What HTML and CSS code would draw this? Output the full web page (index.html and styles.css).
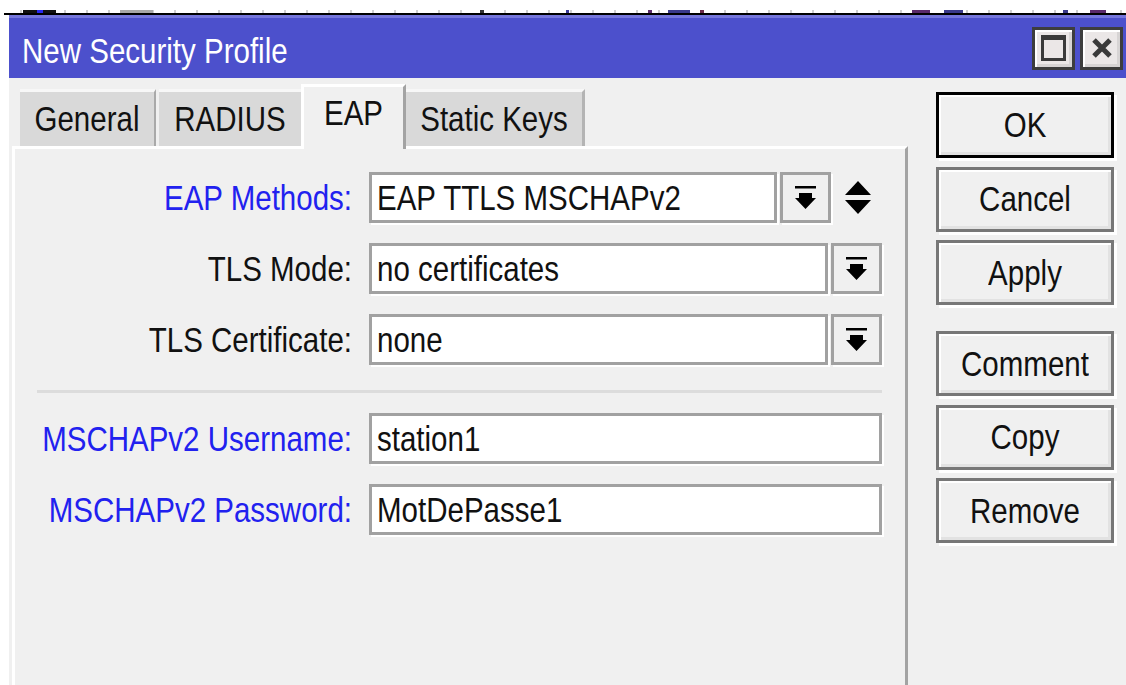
FILE: index.html
```html
<!DOCTYPE html>
<html lang="en">
<head>
<meta charset="utf-8">
<title>New Security Profile</title>
<link rel="stylesheet" href="styles.css">
</head>
<body>
  <div class="backdrop">
    <div class="backdrop-marks"></div>
    <div class="backdrop-edge"></div>
  </div>

  <div class="window">
    <div class="titlebar">
      <span class="title"><span class="tx">New Security Profile</span></span>
      <div class="title-btns">
        <span class="tbtn" title="Maximize">
          <svg width="25" height="26" viewBox="0 0 25 26"><path fill="#3a3a3a" fill-rule="evenodd" d="M0 0H25V26H0Z M3 5V23H22V5Z"/></svg>
        </span>
        <span class="tbtn" title="Close">
          <svg width="20" height="20" viewBox="0 0 20 20"><path stroke="#3a3a3a" stroke-width="5" d="M2 2L18 18M18 2L2 18"/></svg>
        </span>
      </div>
    </div>

    <div class="body">
      <div class="main">
        <div class="tabs">
          <div class="tab tab--general"><span class="tx">General</span></div>
          <div class="tab tab--radius"><span class="tx">RADIUS</span></div>
          <div class="tab tab--active"><span class="tx">EAP</span></div>
          <div class="tab tab--static"><span class="tx">Static Keys</span></div>
        </div>

        <div class="panel">
          <div class="form">
            <div class="row">
              <div class="lbl lbl--blue"><span class="tx">EAP Methods:</span></div>
              <div class="ctl">
                <div class="field"><span class="tx">EAP TTLS MSCHAPv2</span></div>
                <div class="dd">
                  <svg width="21" height="23" viewBox="0 0 21 23"><rect width="21" height="2.5" fill="#000"/><path fill="#000" d="M4 7H17V12H21L10.5 23L0 12H4Z"/></svg>
                </div>
                <div class="updown">
                  <svg width="26" height="33" viewBox="0 0 26 33"><path fill="#000" d="M13 0L26 14H0Z M0 19H26L13 33Z"/></svg>
                </div>
              </div>
            </div>

            <div class="row">
              <div class="lbl"><span class="tx">TLS Mode:</span></div>
              <div class="ctl">
                <div class="field"><span class="tx">no certificates</span></div>
                <div class="dd">
                  <svg width="21" height="23" viewBox="0 0 21 23"><rect width="21" height="2.5" fill="#000"/><path fill="#000" d="M4 7H17V12H21L10.5 23L0 12H4Z"/></svg>
                </div>
              </div>
            </div>

            <div class="row">
              <div class="lbl"><span class="tx">TLS Certificate:</span></div>
              <div class="ctl">
                <div class="field"><span class="tx">none</span></div>
                <div class="dd">
                  <svg width="21" height="23" viewBox="0 0 21 23"><rect width="21" height="2.5" fill="#000"/><path fill="#000" d="M4 7H17V12H21L10.5 23L0 12H4Z"/></svg>
                </div>
              </div>
            </div>

            <div class="sep"></div>

            <div class="row">
              <div class="lbl lbl--blue"><span class="tx">MSCHAPv2 Username:</span></div>
              <div class="ctl">
                <div class="field"><span class="tx">station1</span></div>
              </div>
            </div>

            <div class="row">
              <div class="lbl lbl--blue"><span class="tx">MSCHAPv2 Password:</span></div>
              <div class="ctl">
                <div class="field"><span class="tx">MotDePasse1</span></div>
              </div>
            </div>
          </div>
        </div>
      </div>

      <div class="actions">
        <button class="btn btn--default"><span class="tx">OK</span></button>
        <button class="btn"><span class="tx">Cancel</span></button>
        <button class="btn"><span class="tx">Apply</span></button>
        <button class="btn btn--group"><span class="tx">Comment</span></button>
        <button class="btn"><span class="tx">Copy</span></button>
        <button class="btn"><span class="tx">Remove</span></button>
      </div>
    </div>
  </div>
</body>
</html>
```

FILE: styles.css
```css
* { box-sizing: border-box; }

html, body {
  margin: 0;
  height: 100%;
}

body {
  background: #fff;
  font-family: "Liberation Sans", Arial, sans-serif;
  font-size: 29.5px;
  color: #111;
  overflow: hidden;
}

/* tall, narrow dialog lettering */
.tx {
  display: inline-block;
  transform: scaleY(1.2);
  white-space: nowrap;
}

/* strip of the window lying behind the dialog */
.backdrop {
  height: 15px;
  padding-top: 10px;
}

.backdrop-marks {
  height: 3px;
  background:
    linear-gradient(to right,
      transparent 23px, #111 23px, #111 37px, #2a2aee 37px, #2a2aee 43px, #111 43px, #111 56px,
      transparent 56px, transparent 120px, #a8a8a8 120px, #a8a8a8 153px, transparent 153px,
      transparent 480px, #333 480px, #333 484px, transparent 484px,
      transparent 566px, #3a3a9a 566px, #3a3a9a 569px, transparent 569px,
      transparent 648px, #5a2a6a 648px, #5a2a6a 652px, transparent 652px,
      transparent 668px, #3a3a8a 668px, #3a3a8a 690px, transparent 690px,
      transparent 700px, #6a2a4a 700px, #6a2a4a 704px, transparent 704px,
      transparent 912px, #5a2a6a 912px, #5a2a6a 930px, transparent 930px,
      transparent 944px, #3a3a8a 944px, #3a3a8a 963px, transparent 963px,
      transparent 1063px, #3a3a8a 1063px, #3a3a8a 1068px, transparent 1068px,
      transparent 1090px, #5a2a6a 1090px, #5a2a6a 1106px, transparent 1106px),
    repeating-linear-gradient(to right, transparent 0 20px, #cfcfcf 20px 22px);
}

.backdrop-edge {
  height: 2px;
  margin-left: 4px;
  background: #000;
}

/* dialog window */
.window {
  margin-left: 9px;
  height: calc(100% - 15px);
  background: #f0f0f0;
  display: flex;
  flex-direction: column;
}

.titlebar {
  height: 63px;
  flex: none;
  border-top: 3px solid #7576dc;
  background: #4c50cc;
  color: #fff;
  display: flex;
  align-items: center;
  justify-content: space-between;
  padding: 0 3px 0 13px;
}

.title {
  padding-top: 5px;
}

.title-btns {
  display: flex;
  gap: 5px;
}

.tbtn {
  width: 43px;
  height: 43px;
  border: 3px solid #3d3d3d;
  background: #ebe7e7;
  box-shadow: inset 2px 2px 0 #fff, inset -3px -3px 0 #d7d4d4;
  display: flex;
  align-items: center;
  justify-content: center;
}

.body {
  flex: 1;
  display: flex;
  min-height: 0;
}

.main {
  margin-left: 3px;
  width: 896px;
  display: flex;
  flex-direction: column;
}

/* tab strip */
.tabs {
  height: 68px;
  flex: none;
  display: flex;
  align-items: flex-end;
  padding-left: 8px;
}

.tab {
  height: 57px;
  border-top: 3px solid #f7f7f7;
  background: #d9d9d9;
  display: flex;
  align-items: center;
  justify-content: center;
  color: #111;
}

.tab--general {
  width: 136px;
  border-right: 2px solid #a9a9a9;
}

.tab--radius {
  width: 142px;
  margin-left: 3px;
}

.tab--active {
  position: relative;
  z-index: 1;
  width: 105px;
  height: 65px;
  margin-bottom: -3px;
  padding-bottom: 10px;
  background: #f0f0f0;
  border-top: 3px solid #fff;
  border-left: 3px solid #fff;
  border-right: 3px solid #a3a3a3;
}

.tab--static {
  width: 179px;
  border-right: 3px solid #b4b4b4;
}

.panel {
  flex: 1;
  background: #f0f0f0;
  border-top: 3px solid #fff;
  border-left: 3px solid #fff;
  border-right: 3px solid #a3a3a3;
}

/* form rows */
.form {
  display: flex;
  flex-direction: column;
  padding: 23px 23px 0 0;
}

.form > * + * {
  margin-top: 20px;
}

.form > .sep {
  margin-top: 25px;
}

.row {
  height: 51px;
  display: flex;
  align-items: center;
}

.lbl {
  width: 337px;
  flex: none;
  text-align: right;
  color: #111;
}

.lbl--blue {
  color: #2121ef;
}

.ctl {
  flex: 1;
  height: 51px;
  margin-left: 17px;
  display: flex;
  align-items: center;
}

.field {
  flex: 1;
  height: 51px;
  border: 3px solid #a1a1a1;
  background: #fff;
  box-shadow: 2px 2px 0 #fff;
  padding-left: 5px;
  display: flex;
  align-items: center;
  color: #111;
}

.dd {
  width: 51px;
  height: 51px;
  flex: none;
  margin-left: 3px;
  border: 3px solid #a1a1a1;
  background: #f0f0f0;
  box-shadow: 2px 2px 0 #fff;
  display: flex;
  align-items: center;
  justify-content: center;
}

.updown {
  width: 26px;
  flex: none;
  margin: 0 11px 0 14px;
  display: flex;
}

.sep {
  height: 3px;
  margin-left: 22px;
  background: #dcdcdc;
}

/* command buttons */
.actions {
  width: 178px;
  margin-left: 28px;
  padding-top: 14px;
  display: flex;
  flex-direction: column;
  gap: 8.5px;
}

.btn {
  height: 65px;
  padding: 0;
  border: 3px solid #777;
  background: #f0f0f0;
  box-shadow: 3px 3px 0 #fff, inset 2px 2px 0 #fff, inset -3px -3px 0 #e2e2e2;
  font: inherit;
  color: #111;
  display: flex;
  align-items: center;
  justify-content: center;
}

.btn--default {
  height: 66px;
  border-color: #000;
}

.btn--group {
  margin-top: 17.5px;
}
```
